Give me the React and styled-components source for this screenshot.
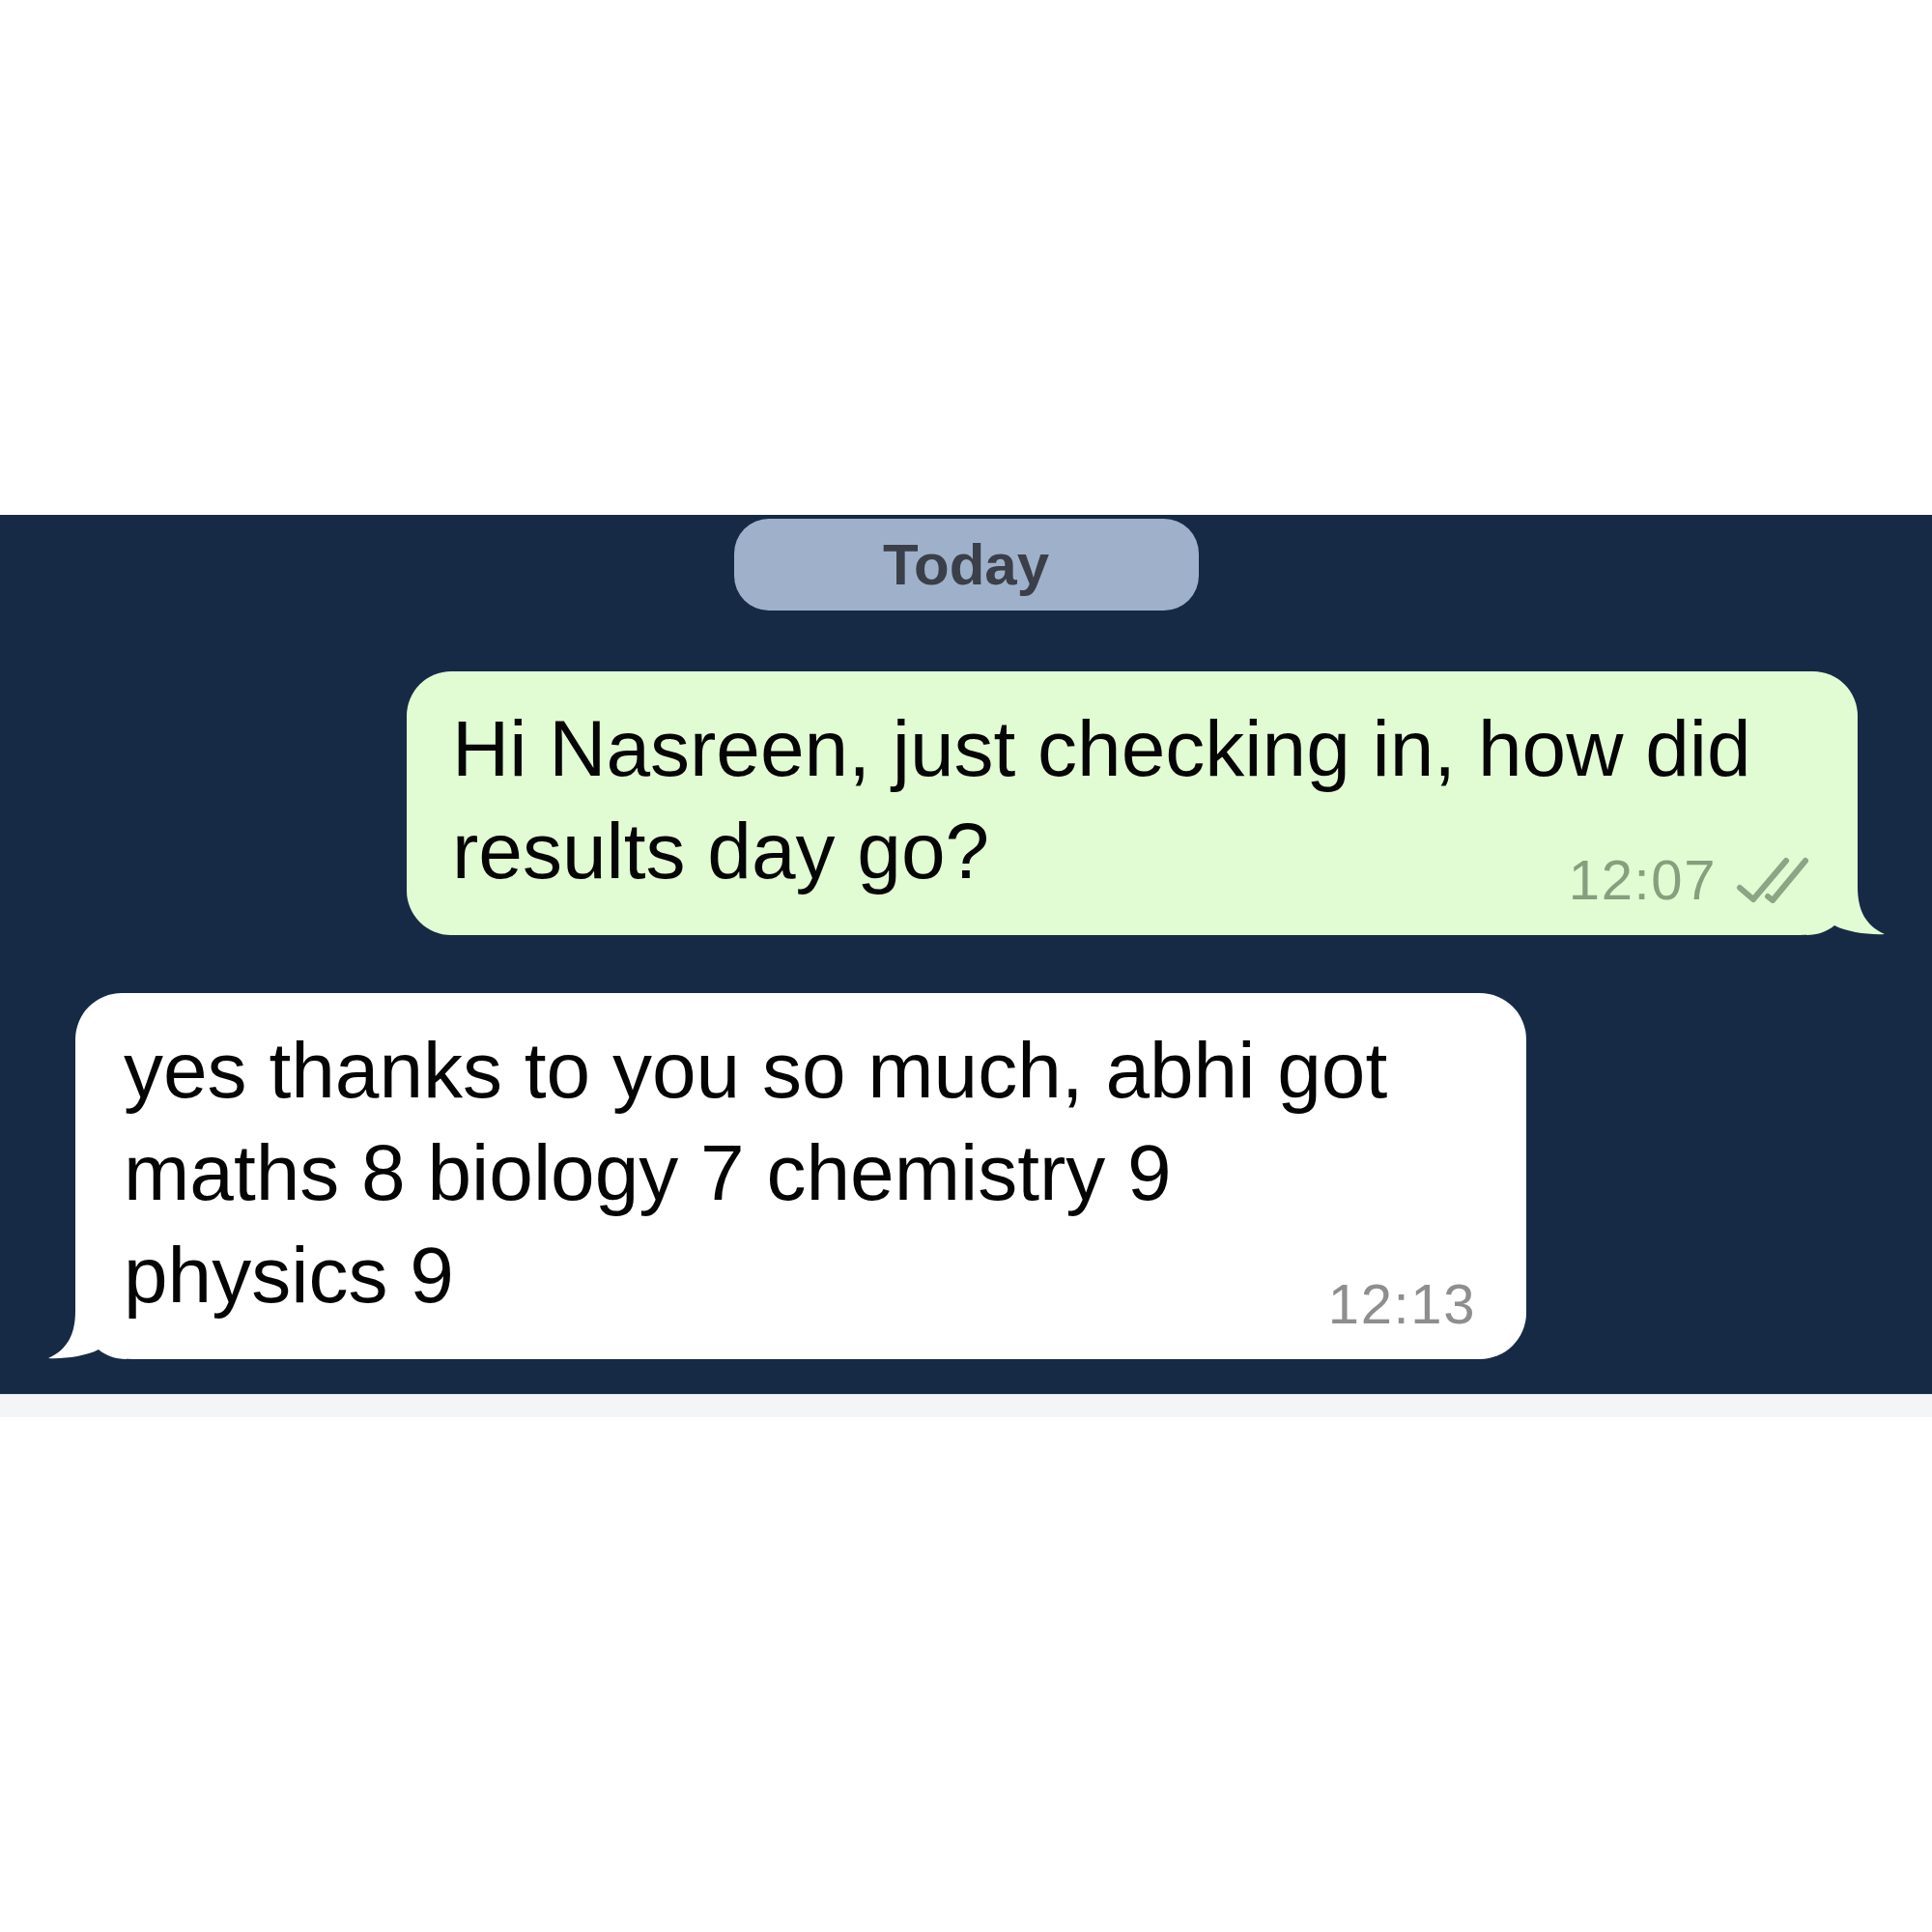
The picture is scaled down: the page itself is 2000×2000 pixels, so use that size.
import React from "react";
import styled, { createGlobalStyle } from "styled-components";

const GlobalStyle = createGlobalStyle`
  html, body { margin: 0; padding: 0; background: #ffffff; }
  body { font-family: "Liberation Sans", Arial, sans-serif; }
`;

const Page = styled.div`
  width: 2000px;
  min-height: 2000px;
  display: flex;
  flex-direction: column;
  background: #ffffff;
`;

const TopSpace = styled.div`
  height: 533px;
  background: #ffffff;
`;

const ChatPanel = styled.section`
  background: #162a45;
  display: flex;
  flex-direction: column;
  padding: 4px 0 36px;
`;

const Strip = styled.div`
  height: 23px;
  background: #f4f5f6;
  border-top: 1px solid #dfe3ea;
`;

const DatePill = styled.div`
  align-self: center;
  width: 481px;
  height: 95px;
  border-radius: 36px;
  background: #9fb1ca;
  color: #3b3f49;
  font-family: "Liberation Sans", Arial, sans-serif;
  font-weight: 700;
  font-size: 60px;
  display: flex;
  align-items: center;
  justify-content: center;
`;

const Row = styled.div`
  display: flex;
  justify-content: ${(p) => (p.$out ? "flex-end" : "flex-start")};
  padding: 0 77px 0 78px;
  margin-top: ${(p) => p.$gap}px;
`;

const Bubble = styled.div`
  position: relative;
  box-sizing: border-box;
  width: 1502px;
  padding: ${(p) => (p.$out ? "27px 50px 27px 47px" : "27px 52px 27px 50px")};
  background: ${(p) => (p.$out ? "#e1fbd3" : "#ffffff")};
  border-radius: ${(p) => (p.$out ? "46px 46px 60px 46px" : "48px 48px 48px 60px")};
`;

const Tail = styled.svg`
  position: absolute;
  bottom: 0;
  width: 81px;
  height: 60px;
  ${(p) => (p.$out ? "right: -28px;" : "left: -28px; transform: scaleX(-1);")}
`;

const Text = styled.div`
  font-family: "Liberation Sans", Arial, sans-serif;
  font-size: 82px;
  line-height: 106px;
  color: #050505;
`;

const Meta = styled.div`
  display: flex;
  justify-content: flex-end;
  align-items: center;
  gap: 20px;
  height: 60px;
  margin-top: -53px;
`;

const Time = styled.span`
  font-family: "Liberation Sans", Arial, sans-serif;
  font-size: 58px;
  line-height: 60px;
  letter-spacing: 1.6px;
  color: ${(p) => (p.$out ? "#84a07e" : "#8e8e8e")};
`;

const TAIL_PATH =
  "M53 0 L53 10 C53 34 61 50 81 59 C66 60 42 57 29 50 C22 56 12 60 0 60 L0 0 Z";

function BubbleTail({ out }) {
  return (
    <Tail $out={out} viewBox="0 0 81 60" aria-hidden="true">
      <path d={TAIL_PATH} fill={out ? "#e1fbd3" : "#ffffff"} />
    </Tail>
  );
}

function DoubleCheck() {
  return (
    <svg width="76" height="48" viewBox="0 0 76 48" aria-hidden="true">
      <g
        fill="none"
        stroke="#8ba585"
        strokeWidth="6"
        strokeLinecap="round"
        strokeLinejoin="round"
      >
        <path d="M4 32 L18 44 L52 4" />
        <path d="M33 41 L38 45 L72 4" />
      </g>
    </svg>
  );
}

export default function App() {
  return (
    <Page>
      <GlobalStyle />
      <TopSpace />
      <ChatPanel>
        <DatePill>Today</DatePill>
        <Row $out $gap={63}>
          <Bubble $out>
            <Text>
              Hi Nasreen, just checking in, how did
              <br />
              results day go?
            </Text>
            <Meta>
              <Time $out>12:07</Time>
              <DoubleCheck />
            </Meta>
            <BubbleTail out />
          </Bubble>
        </Row>
        <Row $gap={60}>
          <Bubble>
            <Text>
              yes thanks to you so much, abhi got
              <br />
              maths 8 biology 7 chemistry 9
              <br />
              physics 9
            </Text>
            <Meta>
              <Time>12:13</Time>
            </Meta>
            <BubbleTail />
          </Bubble>
        </Row>
      </ChatPanel>
      <Strip />
    </Page>
  );
}
